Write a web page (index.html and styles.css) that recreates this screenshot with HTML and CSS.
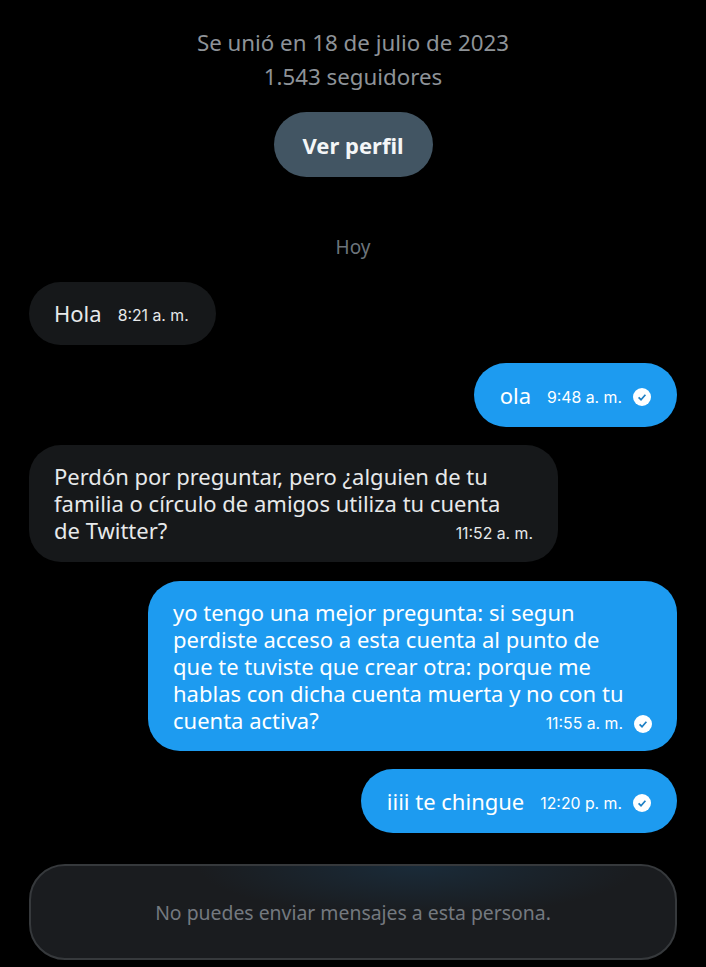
FILE: index.html
```html
<!DOCTYPE html>
<html lang="es">
<head>
  <meta charset="UTF-8">
  <meta name="viewport" content="width=device-width, initial-scale=1.0">
  <title>Mensajes</title>
  <link rel="stylesheet" href="styles.css">
</head>
<body>
  <div class="chat">
    <div class="profile">
      <p class="profile-line">Se unió en 18 de julio de 2023</p>
      <p class="profile-line">1.543 seguidores</p>
      <button class="profile-btn">Ver perfil</button>
    </div>

    <div class="day">Hoy</div>

    <div class="messages">
      <div class="bubble in">
        <span class="text">Hola</span>
        <span class="meta"><span class="time">8:21 a. m.</span></span>
      </div>

      <div class="bubble out">
        <span class="text">ola</span>
        <span class="meta">
          <span class="time">9:48 a. m.</span>
          <svg class="seen" viewBox="0 0 18 18"><circle cx="9" cy="9" r="9" fill="#fff"/><path d="M5.6 9.3l2.4 2.4 4.4-5" fill="none" stroke="#1d7fc4" stroke-width="1.7"/></svg>
        </span>
      </div>

      <div class="bubble in long">
        <span class="text">Perdón por preguntar, pero ¿alguien de tu<br>familia o círculo de amigos utiliza tu cuenta<br>de Twitter?</span>
        <span class="meta"><span class="time">11:52 a. m.</span></span>
      </div>

      <div class="bubble out long tall">
        <span class="text">yo tengo una mejor pregunta: si segun<br>perdiste acceso a esta cuenta al punto de<br>que te tuviste que crear otra: porque me<br>hablas con dicha cuenta muerta y no con tu<br>cuenta activa?</span>
        <span class="meta">
          <span class="time">11:55 a. m.</span>
          <svg class="seen" viewBox="0 0 18 18"><circle cx="9" cy="9" r="9" fill="#fff"/><path d="M5.6 9.3l2.4 2.4 4.4-5" fill="none" stroke="#1d7fc4" stroke-width="1.7"/></svg>
        </span>
      </div>

      <div class="bubble out">
        <span class="text">iiii te chingue</span>
        <span class="meta">
          <span class="time">12:20 p. m.</span>
          <svg class="seen" viewBox="0 0 18 18"><circle cx="9" cy="9" r="9" fill="#fff"/><path d="M5.6 9.3l2.4 2.4 4.4-5" fill="none" stroke="#1d7fc4" stroke-width="1.7"/></svg>
        </span>
      </div>
    </div>

    <div class="blocked">No puedes enviar mensajes a esta persona.</div>
  </div>
</body>
</html>
```

FILE: styles.css
```css
html, body {
  margin: 0;
  height: 967px;
  background: #000;
  overflow: hidden;
}
body {
  font-family: "Noto Sans", Arial, sans-serif;
}
.chat {
  padding: 26px 29px 0;
  display: flex;
  flex-direction: column;
}
.profile {
  display: flex;
  flex-direction: column;
  align-items: center;
}
.profile-line {
  margin: 0;
  color: #8e9398;
  font-size: 22.3px;
  line-height: 34px;
}
.profile-btn {
  margin-top: 18px;
  width: 159px;
  height: 65px;
  border: none;
  border-radius: 33px;
  background: #425563;
  color: #f4f6f7;
  font-family: inherit;
  font-size: 22px;
  font-weight: 700;
}
.day {
  margin-top: 57px;
  text-align: center;
  color: #6c747b;
  font-size: 19px;
  line-height: 26px;
}
.messages {
  margin-top: 22px;
  display: flex;
  flex-direction: column;
  gap: 18px;
}
.bubble {
  box-sizing: border-box;
  display: flex;
  align-items: center;
  gap: 16px;
  min-height: 64px;
  padding: 18px 26px;
  border-radius: 32px;
  font-size: 22px;
  line-height: 27px;
}
.bubble.in {
  align-self: flex-start;
  background: #16181a;
  color: #e7e9ea;
  min-height: 63px;
  padding-left: 25px;
  padding-right: 27px;
}
.bubble.out {
  align-self: flex-end;
  background: #1d9bf0;
  color: #fff;
}
.bubble.long {
  display: block;
  width: 529px;
  padding-left: 25px;
  padding-right: 25px;
}
.bubble.tall {
  margin-top: 1px;
  padding-bottom: 17px;
}
.meta {
  display: inline-flex;
  align-items: center;
  gap: 11px;
  transform: translateY(2px);
  font-family: Inter, Arial, sans-serif;
  font-size: 15.8px;
  white-space: nowrap;
}
.long .meta {
  float: right;
  transform: translateY(3px);
}
.seen {
  width: 18px;
  height: 18px;
  flex: none;
}
.blocked {
  box-sizing: border-box;
  margin-top: 31px;
  height: 96px;
  display: flex;
  align-items: center;
  justify-content: center;
  border: 2px solid #36393c;
  border-radius: 36px;
  background: radial-gradient(ellipse 220px 50px at 60% 0, #1a2b39 0, rgba(26, 43, 57, 0) 100%), #1a1c1f;
  color: #74797f;
  font-size: 19.4px;
}
```
